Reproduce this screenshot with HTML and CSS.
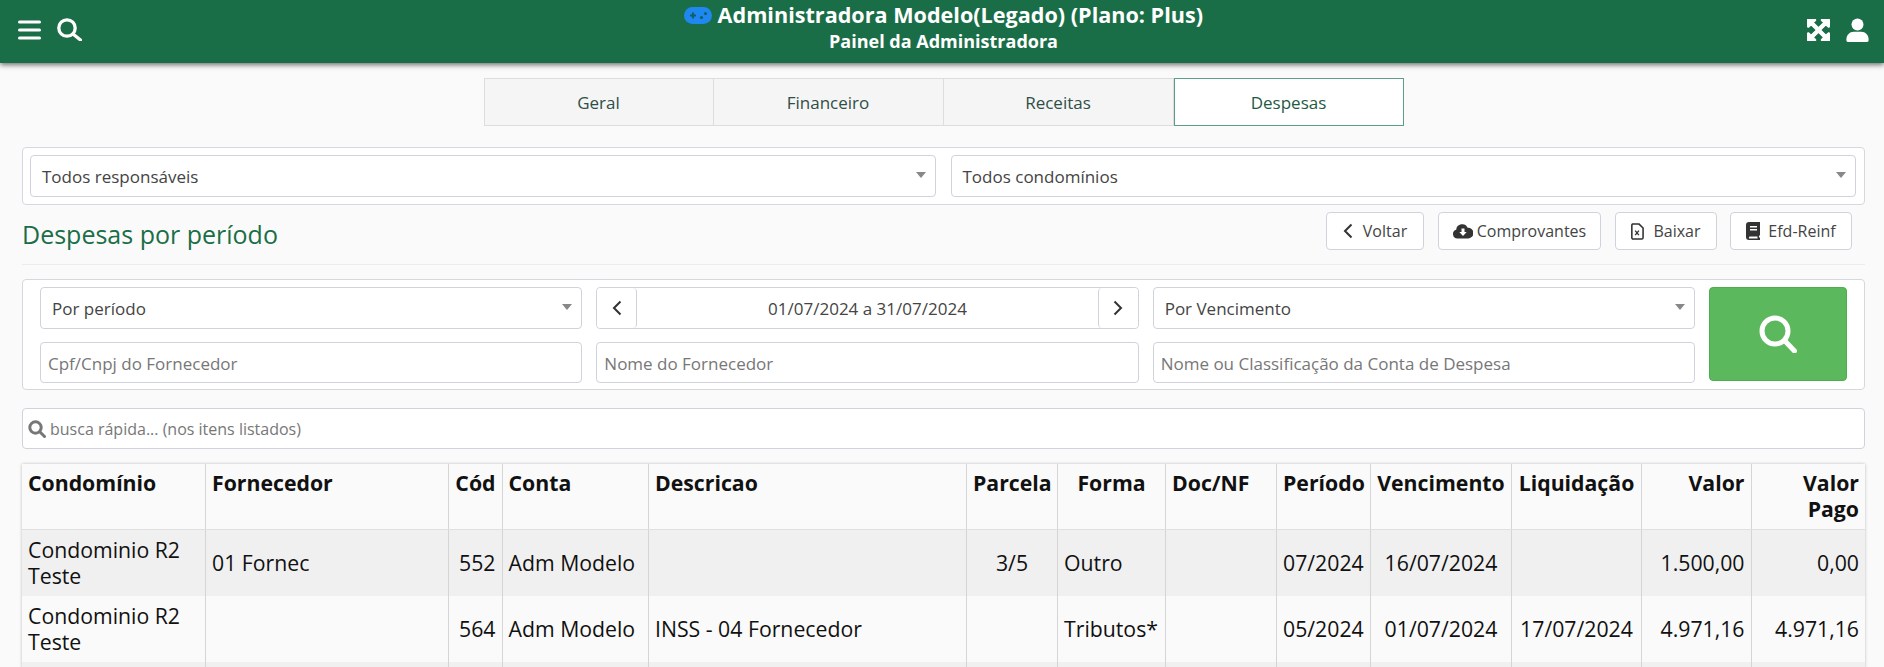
FILE: index.html
```html
<!DOCTYPE html>
<html lang="pt-BR">
<head>
<meta charset="utf-8">
<title>Painel da Administradora</title>
<link rel="stylesheet" href="styles.css">
</head>
<body>
<header class="topbar">
  <div class="topbar-side">
    <svg class="ico-bars" viewBox="0 0 23 20"><path d="M1.500 2h20M1.500 10h20M1.500 18h20"/></svg>
    <svg class="ico-search" viewBox="0 0 25 23"><circle cx="10" cy="10" r="8.200"/><path d="M16 16 23.500 22"/></svg>
  </div>
  <div class="topbar-title">
    <div class="title-main"><svg class="ico-game" viewBox="0 0 28 17"><rect width="28" height="17" rx="8.500" fill="#1e88f0"/><path d="M6 7.500h2v-2h2v2h2v2h-2v2H8v-2H6z" fill="#0f5f66"/><circle cx="17.500" cy="10.500" r="1.600" fill="#0f5f66"/><circle cx="21.500" cy="6.500" r="1.600" fill="#0f5f66"/></svg> Administradora Modelo(Legado) (Plano: Plus)</div>
    <div class="title-sub">Painel da Administradora</div>
  </div>
  <div class="topbar-side topbar-right">
    <svg class="ico-expand" viewBox="128 128 1536 1536"><path d="M1411 541l-355 355 355 355 144-144q29-31 70-14 39 17 39 59v448q0 26-19 45t-45 19h-448q-42 0-59-40-17-39 14-69l144-144-355-355-355 355 144 144q31 30 14 69-17 40-59 40h-448q-26 0-45-19t-19-45v-448q0-42 40-59 39-17 69 14l144 144 355-355-355-355-144 144q-19 19-45 19-12 0-24-5-40-17-40-59v-448q0-26 19-45t45-19h448q42 0 59 40 17 39-14 69l-144 144 355 355 355-355-144-144q-31-30-14-69 17-40 59-40h448q26 0 45 19t19 45v448q0 42-39 59-13 5-25 5-26 0-45-19z"/></svg>
    <svg class="ico-user" viewBox="0 0 24 26"><circle cx="12" cy="7" r="6.500"/><path d="M8 15h8c4.500 0 8 3.500 8 8v1.500c0 .8-.7 1.500-1.500 1.500h-21C.7 26 0 25.300 0 24.500V23c0-4.500 3.500-8 8-8z"/></svg>
  </div>
</header>

<main class="page">
  <nav class="tabs">
    <a class="tab">Geral</a>
    <a class="tab">Financeiro</a>
    <a class="tab">Receitas</a>
    <a class="tab tab-active">Despesas</a>
  </nav>

  <section class="panel panel-top">
    <div class="select"><span>Todos responsáveis</span><i class="caret"></i></div>
    <div class="select"><span>Todos condomínios</span><i class="caret"></i></div>
  </section>

  <div class="heading-row">
    <h1 class="heading">Despesas por período</h1>
    <div class="actions">
      <button class="btn btn-voltar"><svg class="ico-chev" viewBox="0 0 10 16"><path d="M8.500 1.500 2 8l6.500 6.500"/></svg>Voltar</button>
      <button class="btn btn-comp"><svg class="ico-cloud" viewBox="0 0 20 16"><path d="M4.500 15.500A4.500 4.500 0 0 1 3.200 6.700 6 6 0 0 1 14.600 4.700 5.300 5.300 0 0 1 15.500 15.500z"/><path class="cut" d="M8.500 5.500h3v3.500h2.200L10 13 6.300 9h2.200z"/></svg>Comprovantes</button>
      <button class="btn btn-baixar"><svg class="ico-file" viewBox="0 0 14 18"><path class="file-o" d="M1.700 1h7L13 5.300V15.500a1.500 1.500 0 0 1-1.500 1.500h-9.800A1.500 1.500 0 0 1 .9 15.500V2.500A1.500 1.500 0 0 1 1.700 1z"/><path class="file-x" d="m4.500 8 4 5M8.500 8l-4 5"/></svg>Baixar</button>
      <button class="btn btn-efd"><svg class="ico-book" viewBox="0 0 14 18"><path fill-rule="evenodd" d="M3 0h11v13.500H13v2h1V18H3a3 3 0 0 1-3-3V3a3 3 0 0 1 3-3zM4 4v1.500h7V4zM4 7v1.500h7V7zM3 15.500a1 1 0 0 0 0 1H11.500v-2H3.500z"/></svg>Efd-Reinf</button>
    </div>
  </div>

  <section class="panel panel-search">
    <div class="search-fields">
      <div class="select"><span>Por período</span><i class="caret"></i></div>
      <div class="date-group">
        <button class="date-btn date-prev"><svg class="ico-chev" viewBox="0 0 10 16"><path d="M8.500 1.500 2 8l6.500 6.500"/></svg></button>
        <div class="date-value">01/07/2024 a 31/07/2024</div>
        <button class="date-btn date-next"><svg class="ico-chev" viewBox="0 0 10 16"><path d="M1.500 1.500 8 8l-6.500 6.500"/></svg></button>
      </div>
      <div class="select"><span>Por Vencimento</span><i class="caret"></i></div>
      <input class="input" placeholder="Cpf/Cnpj do Fornecedor">
      <input class="input" placeholder="Nome do Fornecedor">
      <input class="input" placeholder="Nome ou Classificação da Conta de Despesa">
    </div>
    <button class="search-go"><svg class="ico-search-lg" viewBox="0 0 38 38"><circle cx="16" cy="16" r="13"/><path d="m25.500 25.500 10 10.500"/></svg></button>
  </section>

  <div class="quick">
    <svg class="ico-quick" viewBox="0 0 18 18"><circle cx="7.500" cy="7.500" r="5.700"/><path d="m12 12 4.500 4.500"/></svg>
    <span>busca rápida... (nos itens listados)</span>
  </div>

  <table class="grid">
    <colgroup>
      <col class="c1"><col class="c2"><col class="c3"><col class="c4"><col class="c5"><col class="c6"><col class="c7"><col class="c8"><col class="c9"><col class="c10"><col class="c11"><col class="c12"><col class="c13">
    </colgroup>
    <thead>
      <tr>
        <th>Condomínio</th><th>Fornecedor</th><th class="r">Cód</th><th>Conta</th><th>Descricao</th><th class="m">Parcela</th><th class="m">Forma</th><th>Doc/NF</th><th>Período</th><th class="m">Vencimento</th><th class="m">Liquidação</th><th class="r">Valor</th><th class="r">Valor Pago</th>
      </tr>
    </thead>
    <tbody>
      <tr class="odd">
        <td>Condominio R2 Teste</td><td>01 Fornec</td><td class="r">552</td><td>Adm Modelo</td><td></td><td class="m">3/5</td><td>Outro</td><td></td><td>07/2024</td><td class="m">16/07/2024</td><td class="m"></td><td class="r">1.500,00</td><td class="r">0,00</td>
      </tr>
      <tr>
        <td>Condominio R2 Teste</td><td></td><td class="r">564</td><td>Adm Modelo</td><td>INSS - 04 Fornecedor</td><td class="m"></td><td>Tributos*</td><td></td><td>05/2024</td><td class="m">01/07/2024</td><td class="m">17/07/2024</td><td class="r">4.971,16</td><td class="r">4.971,16</td>
      </tr>
      <tr class="odd tail">
        <td></td><td></td><td></td><td></td><td></td><td></td><td></td><td></td><td></td><td></td><td></td><td></td><td></td>
      </tr>
    </tbody>
  </table>
</main>
</body>
</html>
```

FILE: styles.css
```css
* { box-sizing: border-box; }
html, body { margin: 0; height: 667px; overflow: hidden; }
body { background: #fafafa; font-family: "Open Sans", "Noto Sans", sans-serif; color: #333; font-size: 17px; }

.topbar { height: 63px; background: #1a6e47; box-shadow: 0 2px 5px rgba(0,0,0,.55); display: flex; align-items: flex-start; justify-content: space-between; position: relative; color: #fff; padding: 0 15px 0 18px; }
.topbar-side { display: flex; align-items: center; gap: 16px; height: 59px; width: 200px; }
.topbar-right { justify-content: flex-end; gap: 16px; }
.topbar-title { text-align: center; font-weight: 700; flex: 1; }
.title-main { font-size: 21.600px; line-height: 26px; margin-top: 2px; }
.title-sub { font-size: 18px; line-height: 22px; margin-top: 2px; }
.ico-bars { width: 23px; height: 20px; fill: none; stroke: #fff; stroke-width: 3; stroke-linecap: round; }
.ico-search { width: 25px; height: 23px; fill: none; stroke: #fff; stroke-width: 3.300; stroke-linecap: round; }
.ico-game { width: 28px; height: 17px; vertical-align: -1px; }
.ico-expand { width: 23px; height: 22px; fill: #fff; stroke: #fff; stroke-width: 70; }
.ico-user { width: 23px; height: 24px; fill: #fff; }

.page { padding: 15px 19px 0 22px; }

.tabs { display: flex; justify-content: center; height: 48px; }
.tab { width: 230px; background: #f5f5f5; border: 1px solid #ddd; border-left-width: 0; display: flex; align-items: center; justify-content: center; color: #2f4f45; font-size: 17px; }
.tab:first-child { border-left-width: 1px; }
.tab-active { background: #fff; border-color: #5d9f85; border-left-width: 1px; color: #1f5a44; }

.panel { background: #fff; border: 1px solid #d6d8de; border-radius: 4px; }
.panel-top { margin-top: 21px; height: 58px; padding: 7px 8px 7px 7px; display: flex; gap: 15px; }
.select { flex: 1; height: 42px; background: #fff; border: 1px solid #d0d3dc; border-radius: 4px; display: flex; align-items: center; justify-content: space-between; padding: 1px 9px 0 11px; font-size: 17px; color: #444; }
.caret { width: 0; height: 0; border-left: 5px solid transparent; border-right: 5px solid transparent; border-top: 6px solid #888; margin-top: -4px; }

.heading-row { display: flex; justify-content: space-between; margin-top: 7px; padding: 0 13px 0 0; border-bottom: 1px solid #ececec; height: 53px; }
.heading { margin: 0; font-size: 25px; font-weight: 400; line-height: 44px; color: #1a6e47; }
.actions { display: flex; gap: 14px; }
.btn { height: 38px; background: #fff; border: 1px solid #d0d3dc; border-radius: 4px; font: 400 16px "Open Sans", "Noto Sans", sans-serif; color: #444; display: flex; align-items: center; justify-content: center; padding: 0; }
.btn-voltar { width: 98px; gap: 10px; }
.btn-comp { width: 163px; gap: 4px; }
.btn-baixar { width: 102px; gap: 9px; }
.btn-efd { width: 122px; gap: 8px; margin-left: -1px; }
.ico-chev { width: 10px; height: 16px; fill: none; stroke: #333; stroke-width: 2; }
.ico-cloud { width: 20px; height: 16px; fill: #333; }
.ico-cloud .cut { fill: #fff; }
.ico-file { width: 13px; height: 17px; }
.file-o { fill: #fff; stroke: #333; stroke-width: 1.700; }
.file-x { fill: none; stroke: #333; stroke-width: 1.400; }
.ico-book { width: 14px; height: 18px; fill: #333; }

.panel-search { margin-top: 14px; height: 111px; padding: 7px 17px 0 17px; display: flex; gap: 14px; }
.search-fields { flex: 1; display: grid; grid-template-columns: 1fr 1fr 1fr; grid-template-rows: 42px 41px; column-gap: 14px; row-gap: 13px; }
.date-group { display: flex; height: 42px; background: #fff; border: 1px solid #d0d3dc; border-radius: 4px; }
.date-btn { width: 40px; background: #fff; border: 0; padding: 0; display: flex; align-items: center; justify-content: center; border-radius: 4px; }
.date-prev { border-right: 1px solid #d0d3dc; }
.date-next { border-left: 1px solid #d0d3dc; }
.date-value { flex: 1; text-align: center; line-height: 42px; font-size: 17px; color: #444; }
.input { height: 41px; width: 100%; border: 1px solid #d0d3dc; border-radius: 4px; background: #fff; padding: 1px 7px 0; font: 400 17px "Open Sans", "Noto Sans", sans-serif; color: #444; }
.input::placeholder { color: #777; opacity: 1; }
.search-go { width: 138px; height: 94px; background: #5cb85c; border: 1px solid #4cae4c; border-radius: 4px; display: flex; align-items: center; justify-content: center; padding: 0; }
.ico-search-lg { width: 38px; height: 38px; fill: none; stroke: #fff; stroke-width: 5; stroke-linecap: round; }

.quick { margin-top: 18px; height: 41px; background: #fff; border: 1px solid #d0d3dc; border-radius: 4px; display: flex; align-items: center; gap: 4px; padding: 1px 5px 0; font-size: 16px; color: #777; }
.ico-quick { width: 18px; height: 18px; fill: none; stroke: #777; stroke-width: 3; stroke-linecap: round; margin-top: -1px; }

.grid { margin-top: 15px; width: 1843px; table-layout: fixed; border-collapse: collapse; background: #fafafa; box-shadow: 0 0 3px rgba(0,0,0,.25); color: #111; font-size: 21.250px; line-height: 26px; }
.c1 { width: 183.500px; } .c2 { width: 243px; } .c3 { width: 53.500px; } .c4 { width: 146.500px; } .c5 { width: 318px; } .c6 { width: 91px; } .c7 { width: 108px; } .c8 { width: 111px; } .c9 { width: 94px; } .c10 { width: 141px; } .c11 { width: 130px; } .c12 { width: 109.500px; } .c13 { width: 114px; }
.grid th, .grid td { border-left: 1px solid #d5d5d5; padding: 7px 6px; text-align: left; }
.grid th:first-child, .grid td:first-child { border-left: 0; }
.grid th { height: 65px; vertical-align: top; font-weight: 700; padding-top: 6px; border-bottom: 1px solid #e0e0e0; white-space: normal; }
.grid td { height: 66px; vertical-align: middle; }
.grid .tail td { height: 6px; padding: 0; }
.grid .r { text-align: right; }
.grid .m { text-align: center; }
.odd { background: #f0f0f0; }
```
